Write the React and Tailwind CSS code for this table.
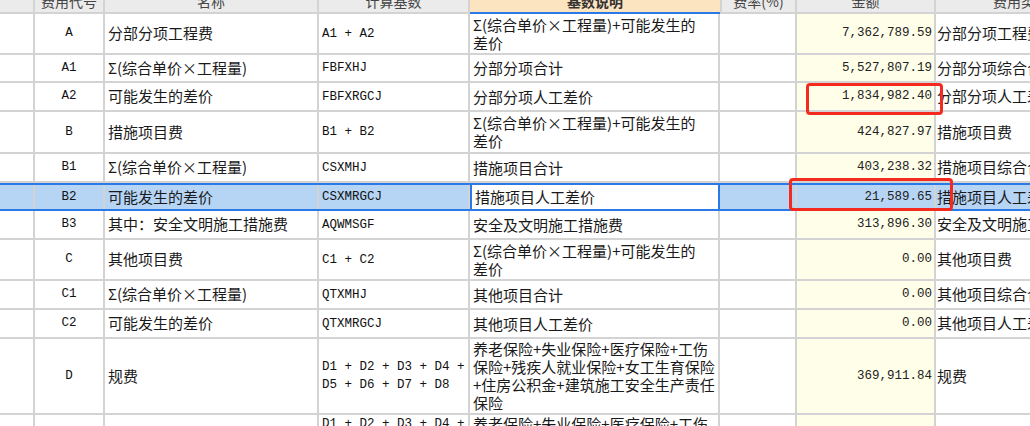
import React from "react";

const SUM_DESC = ["Σ(综合单价×工程量)+可能发生的", "差价"];

const rows = [
  { code: "A", name: "分部分项工程费", base: ["A1 + A2"], desc: SUM_DESC, amount: "7,362,789.59", cat: "分部分项工程费", h: "h-[41px]" },
  { code: "A1", name: "Σ(综合单价×工程量)", base: ["FBFXHJ"], desc: ["分部分项合计"], amount: "5,527,807.19", cat: "分部分项综合合计", h: "h-[28px]" },
  { code: "A2", name: "可能发生的差价", base: ["FBFXRGCJ"], desc: ["分部分项人工差价"], amount: "1,834,982.40", cat: "分部分项人工差价", h: "h-[29px]" },
  { code: "B", name: "措施项目费", base: ["B1 + B2"], desc: SUM_DESC, amount: "424,827.97", cat: "措施项目费", h: "h-[42px]" },
  { code: "B1", name: "Σ(综合单价×工程量)", base: ["CSXMHJ"], desc: ["措施项目合计"], amount: "403,238.32", cat: "措施项目综合合计", h: "h-[29px]" },
  { code: "B2", name: "可能发生的差价", base: ["CSXMRGCJ"], desc: ["措施项目人工差价"], amount: "21,589.65", cat: "措施项目人工差价", h: "h-[28px]", selected: true },
  { code: "B3", name: "其中：安全文明施工措施费", base: ["AQWMSGF"], desc: ["安全及文明施工措施费"], amount: "313,896.30", cat: "安全及文明施工措施费", h: "h-[29px]" },
  { code: "C", name: "其他项目费", base: ["C1 + C2"], desc: SUM_DESC, amount: "0.00", cat: "其他项目费", h: "h-[41px]" },
  { code: "C1", name: "Σ(综合单价×工程量)", base: ["QTXMHJ"], desc: ["其他项目合计"], amount: "0.00", cat: "其他项目综合合计", h: "h-[29px]" },
  { code: "C2", name: "可能发生的差价", base: ["QTXMRGCJ"], desc: ["其他项目人工差价"], amount: "0.00", cat: "其他项目人工差价", h: "h-[29px]" },
  {
    code: "D",
    name: "规费",
    base: ["D1 + D2 + D3 + D4 +", "D5 + D6 + D7 + D8"],
    desc: ["养老保险+失业保险+医疗保险+工伤", "保险+残疾人就业保险+女工生育保险", "+住房公积金+建筑施工安全生产责任", "保险"],
    amount: "369,911.84",
    cat: "规费",
    h: "h-[76px]",
  },
];

const cjk = "font-['Noto_Sans_CJK_SC',sans-serif]";
const mono = "font-['Liberation_Mono','Noto_Sans_CJK_SC',monospace]";
const line = "border-[#d3d3d3]";

// the × sign is drawn full width in the original grid font
function fmt(t) {
  if (!t.includes("×")) return t;
  const [a, b] = t.split("×");
  return (
    <>
      {a}
      <span className="inline-block w-[15px] text-center">×</span>
      {b}
    </>
  );
}

function Lines({ items }) {
  return (
    <div className="flex flex-col">
      {items.map((t, i) => (
        <span key={i} className="whitespace-nowrap leading-[18px]">{fmt(t)}</span>
      ))}
    </div>
  );
}

function Row({ r }) {
  const sel = r.selected;
  return (
    <div className={`flex ${r.h} ${sel ? "bg-[#b6d5f5] border-y-2 border-[#2b79e6]" : "border-b-2 " + line}`}>
      <div className={`w-[35px] shrink-0 border-r-2 ${line}`} />
      <div className={`w-[70px] shrink-0 border-r-2 ${line} flex items-center justify-center ${mono} text-[12.5px] text-[#111]`}>
        {r.code}
      </div>
      <div className={`w-[214px] shrink-0 border-r-2 ${line} flex items-center pl-[3px] ${cjk} text-[15px] text-[#1a1a1a] overflow-hidden`}>
        <span className="whitespace-nowrap">{fmt(r.name)}</span>
      </div>
      <div className={`w-[151px] shrink-0 border-r-2 ${line} flex items-center pl-[3px] ${mono} text-[12.5px] text-[#111] overflow-hidden`}>
        <Lines items={r.base} />
      </div>
      <div
        className={`w-[250px] shrink-0 flex items-center pl-[3px] ${cjk} text-[15px] text-[#1a1a1a] overflow-hidden ${
          sel ? "bg-white border-x-2 border-[#2b79e6]" : "border-r-2 " + line
        }`}
      >
        <Lines items={r.desc} />
      </div>
      <div className={`w-[77px] shrink-0 border-r-2 ${line}`} />
      <div
        className={`w-[139px] shrink-0 border-r-2 ${line} flex items-center justify-end pr-[2px] ${mono} text-[12.5px] text-[#222] ${
          sel ? "" : "bg-[#fefee9]"
        }`}
      >
        {r.amount}
      </div>
      <div className={`w-[170px] shrink-0 flex items-center pl-[1px] ${cjk} text-[15px] text-[#1a1a1a] overflow-hidden`}>
        <span className="whitespace-nowrap">{r.cat}</span>
      </div>
    </div>
  );
}

function Head({ w, children, extra = "" }) {
  return (
    <div className={`${w} shrink-0 h-full overflow-hidden flex justify-center ${extra}`}>
      <span className="mt-[-8px] leading-[18px] whitespace-nowrap">{children}</span>
    </div>
  );
}

export default function App() {
  return (
    <div className="relative w-[1030px] h-[426px] overflow-hidden bg-white">
      <div className="w-[1106px]">
        {/* header, scrolled so only the lower half shows */}
        <div className={`flex h-[14px] bg-[#ebebeb] border-b-2 ${line} ${cjk} text-[14px] text-[#444]`}>
          <Head w="w-[35px]" extra={`border-r-2 ${line}`}>{""}</Head>
          <Head w="w-[70px]" extra={`border-r-2 ${line}`}>费用代号</Head>
          <Head w="w-[214px]" extra={`border-r-2 ${line}`}>名称</Head>
          <Head w="w-[151px]" extra={`border-r-2 ${line}`}>计算基数</Head>
          <div className="w-[250px] shrink-0 h-[14px] -mb-[2px] overflow-hidden flex justify-center bg-[#fde4c1] border-b-2 border-[#2b79e6] font-bold text-[#333]">
            <span className="mt-[-8px] leading-[18px] whitespace-nowrap">基数说明</span>
          </div>
          <Head w="w-[77px]" extra={`border-x-2 ${line}`}>费率(%)</Head>
          <Head w="w-[139px]" extra={`border-r-2 ${line}`}>金额</Head>
          <Head w="w-[170px]">费用类别</Head>
        </div>

        {rows.map((r) => (
          <Row key={r.code} r={r} />
        ))}

        {/* next row, only its top is visible */}
        <div className="flex h-[80px]">
          <div className={`w-[35px] shrink-0 border-r-2 ${line}`} />
          <div className={`w-[70px] shrink-0 border-r-2 ${line}`} />
          <div className={`w-[214px] shrink-0 border-r-2 ${line}`} />
          <div className={`w-[151px] shrink-0 border-r-2 ${line} pl-[3px] ${mono} text-[12.5px] text-[#111] overflow-hidden`}>
            <Lines items={["D1 + D2 + D3 + D4 +", "D5 + D6 + D7 + D8"]} />
          </div>
          <div className={`w-[250px] shrink-0 border-r-2 ${line} pl-[3px] ${cjk} text-[15px] text-[#1a1a1a] overflow-hidden`}>
            <Lines items={["养老保险+失业保险+医疗保险+工伤", "保险+残疾人就业保险+女工生育保险"]} />
          </div>
          <div className={`w-[77px] shrink-0 border-r-2 ${line}`} />
          <div className={`w-[139px] shrink-0 border-r-2 ${line} bg-[#fefee9]`} />
          <div className="w-[170px] shrink-0" />
        </div>
      </div>

      {/* red highlight boxes */}
      <div className="absolute left-[806px] top-[83px] w-[137px] h-[32px] border-[3px] border-[#f52a1f] rounded-[4px]" />
      <div className="absolute left-[789px] top-[178px] w-[164px] h-[33px] border-[3px] border-[#f52a1f] rounded-[4px]" />
    </div>
  );
}
